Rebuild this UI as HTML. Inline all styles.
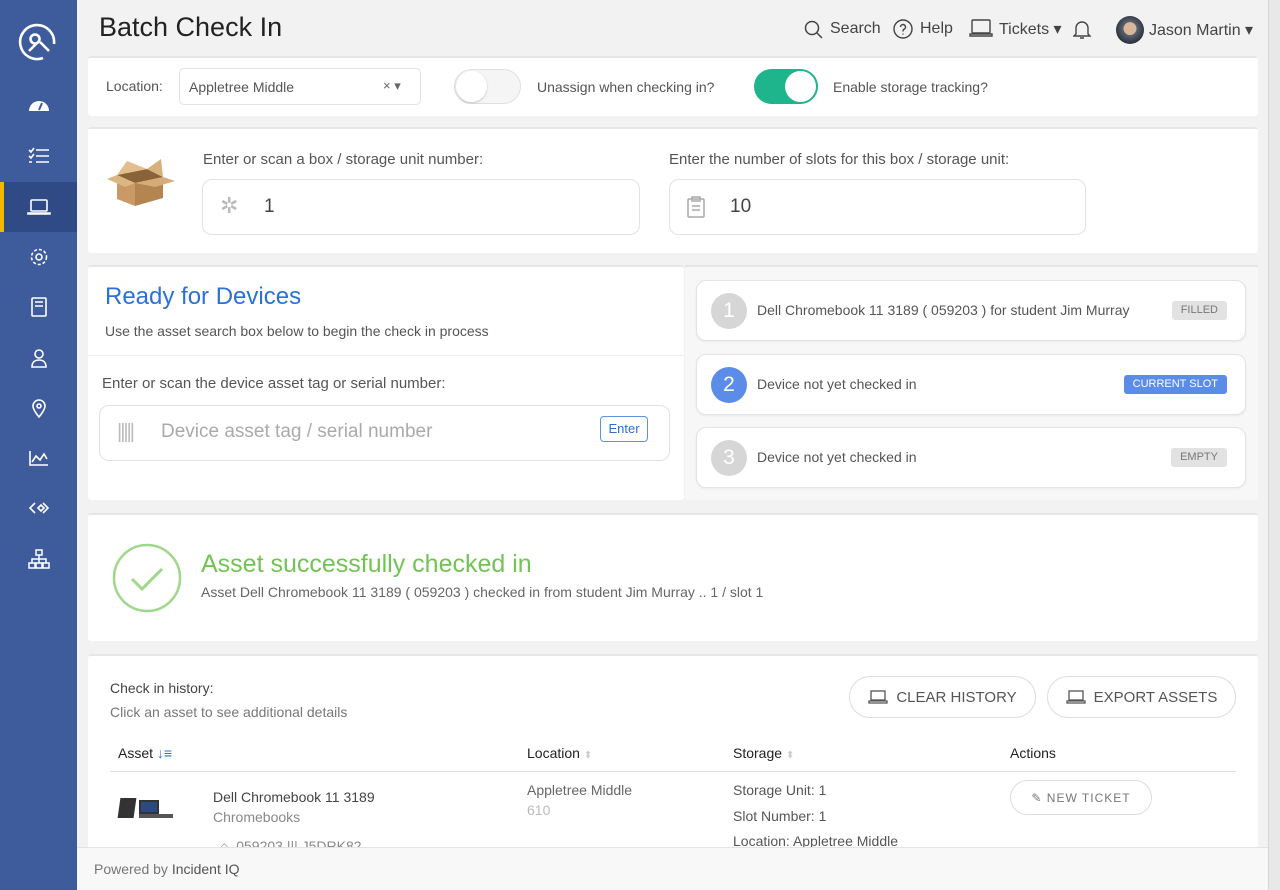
<!DOCTYPE html>
<html><head><meta charset="utf-8"><style>
*{box-sizing:border-box;margin:0;padding:0}
body{width:1280px;height:890px;overflow:hidden;background:#f2f2f2;font-family:"Liberation Sans",sans-serif;color:#555;position:relative}
.abs{position:absolute}
#side{left:0;top:0;width:77px;height:890px;background:#3e5b9b}
.si{position:absolute;left:0;width:77px;height:50px;display:flex;align-items:center;justify-content:center}
.card{position:absolute;background:#fff;border-radius:3px;border-top:2px solid #e6e6e6}
.t{position:absolute;white-space:nowrap}
.inp{position:absolute;border:1px solid #e2e2e2;border-radius:10px;background:#fff}
.slot{position:absolute;left:696px;width:550px;height:61px;background:#fff;border:1px solid #e3e3e3;border-radius:10px;box-shadow:0 1px 2px rgba(0,0,0,.06)}
.num{position:absolute;left:14px;top:12px;width:36px;height:36px;border-radius:50%;background:#d6d6d6;color:#fff;font-size:21px;text-align:center;line-height:36px}
.badge{position:absolute;right:18px;top:20px;height:19px;padding:0 9px;border-radius:3px;background:#e2e2e2;color:#777;font-size:11px;line-height:19px}
.btn{position:absolute;border:1px solid #ddd;border-radius:21px;background:#fff;font-size:15px;color:#555;display:flex;align-items:center;justify-content:center;gap:8px}
</style></head><body>
<div id="side" class="abs">
 <svg class="abs" style="left:17px;top:22px" width="40" height="40" viewBox="0 0 40 40" fill="none" stroke="#fff" stroke-width="2.6"><path d="M26 36A17 17 0 1 1 37 22"/><circle cx="18" cy="17" r="4.5"/><path d="M20 21l-8 8M23 20l9 9"/></svg>
 <div class="si" style="top:80px"><svg width="22" height="18" viewBox="0 0 22 18"><path d="M1 15A10 10 0 0 1 21 15Z" fill="#fff"/><path d="M11 14l3-7" stroke="#3e5b9b" stroke-width="2"/></svg></div>
 <div class="si" style="top:131px"><svg width="22" height="18" viewBox="0 0 22 18" stroke="#fff" stroke-width="1.6" fill="none"><path d="M1 3l2 2 3-4M1 9l2 2 3-4M1 15h3M8 3h13M8 9h13M8 15h13"/></svg></div>
 <div class="si" style="top:182px;background:#2f4a85"><div class="abs" style="left:0;top:0;width:4px;height:50px;background:#f5b800"></div><svg width="24" height="18" viewBox="0 0 24 18" stroke="#fff" stroke-width="1.6" fill="none"><rect x="4" y="2" width="16" height="11" rx="1"/><path d="M1 15h22v1H1z"/></svg></div>
 <div class="si" style="top:232px"><svg width="20" height="20" viewBox="0 0 20 20" stroke="#fff" stroke-width="1.6" fill="none"><circle cx="10" cy="10" r="3"/><circle cx="10" cy="10" r="7.5" stroke-dasharray="3 2"/></svg></div>
 <div class="si" style="top:282px"><svg width="18" height="20" viewBox="0 0 18 20" stroke="#fff" stroke-width="1.6" fill="none"><rect x="2" y="1" width="14" height="18" rx="1"/><path d="M5 5h8M5 9h8"/></svg></div>
 <div class="si" style="top:333px"><svg width="18" height="20" viewBox="0 0 18 20" stroke="#fff" stroke-width="1.6" fill="none"><circle cx="9" cy="6" r="4"/><path d="M2 19c0-5 3-7 7-7s7 2 7 7z"/></svg></div>
 <div class="si" style="top:383px"><svg width="16" height="20" viewBox="0 0 16 20" stroke="#fff" stroke-width="1.6" fill="none"><path d="M8 19s-6-7-6-11a6 6 0 0 1 12 0c0 4-6 11-6 11z"/><circle cx="8" cy="8" r="2"/></svg></div>
 <div class="si" style="top:433px"><svg width="20" height="16" viewBox="0 0 20 16" stroke="#fff" stroke-width="1.6" fill="none"><path d="M1 1v14h18M3 12l4-6 4 4 4-6 3 5"/></svg></div>
 <div class="si" style="top:483px"><svg width="20" height="16" viewBox="0 0 20 16" stroke="#fff" stroke-width="1.6" fill="none"><path d="M6 3L1 8l5 5M14 3l5 5-5 5M9 8l3-3 3 3-3 3z"/></svg></div>
 <div class="si" style="top:534px"><svg width="22" height="20" viewBox="0 0 22 20" stroke="#fff" stroke-width="1.5" fill="none"><rect x="8" y="1" width="6" height="5"/><rect x="1" y="14" width="6" height="5"/><rect x="8" y="14" width="6" height="5"/><rect x="15" y="14" width="6" height="5"/><path d="M11 6v8M4 14v-4h14v4"/></svg></div>
</div>
<div class="abs" style="left:1268px;top:0;width:12px;height:890px;background:#e8e8e8;border-left:1px solid #d6d6d6"></div>

<div class="t" style="left:99px;top:12px;font-size:27px;color:#222">Batch Check In</div>
<svg class="abs" style="left:804px;top:20px" width="19" height="19" viewBox="0 0 19 19" stroke="#444" stroke-width="1.5" fill="none"><circle cx="8" cy="8" r="6.5"/><path d="M13 13l5 5"/></svg>
<div class="t" style="left:830px;top:20px;font-size:16px;color:#444">Search</div>
<svg class="abs" style="left:893px;top:19px" width="20" height="20" viewBox="0 0 20 20" stroke="#444" stroke-width="1.4" fill="none"><circle cx="10" cy="10" r="9"/><path d="M7.5 8a2.5 2.5 0 1 1 3.5 2.3c-1 .5-1 1-1 2.2M10 14.5v1"/></svg>
<div class="t" style="left:920px;top:20px;font-size:16px;color:#444">Help</div>
<svg class="abs" style="left:969px;top:19px" width="24" height="19" viewBox="0 0 24 19" stroke="#444" stroke-width="1.4" fill="none"><rect x="3" y="1" width="18" height="13" rx="1"/><path d="M1 15h22v2H1z"/></svg>
<div class="t" style="left:999px;top:19px;font-size:16px;color:#444">Tickets ▾</div>
<svg class="abs" style="left:1073px;top:19px" width="18" height="21" viewBox="0 0 18 21" stroke="#444" stroke-width="1.4" fill="none"><path d="M3 15V9a6 6 0 0 1 12 0v6l2 2H1zM7 19h4"/></svg>
<div class="abs" style="left:1116px;top:16px;width:28px;height:28px;border-radius:50%;background:radial-gradient(circle at 50% 45%,#d9b59a 0 30%,#5b6470 32%,#2c3340 70%)"></div>
<div class="t" style="left:1149px;top:20px;font-size:16px;color:#444">Jason Martin ▾</div>

<div class="card" style="left:88px;top:56px;width:1170px;height:60px"></div>
<div class="t" style="left:106px;top:78px;font-size:14px">Location:</div>
<div class="inp" style="left:179px;top:68px;width:242px;height:37px;border-radius:5px"></div>
<div class="t" style="left:189px;top:79px;font-size:14px">Appletree Middle</div>
<div class="t" style="left:383px;top:78px;font-size:13px;color:#666">× ▾</div>
<div class="abs" style="left:454px;top:69px;width:67px;height:35px;border-radius:18px;background:#f5f5f5;border:1px solid #e0e0e0"><div class="abs" style="left:1px;top:1px;width:31px;height:31px;border-radius:50%;background:#fff;box-shadow:0 1px 2px rgba(0,0,0,.2)"></div></div>
<div class="t" style="left:537px;top:79px;font-size:14px">Unassign when checking in?</div>
<div class="abs" style="left:754px;top:69px;width:64px;height:35px;border-radius:18px;background:#1eb48c"><div class="abs" style="left:31px;top:2px;width:31px;height:31px;border-radius:50%;background:#fff"></div></div>
<div class="t" style="left:833px;top:79px;font-size:14px">Enable storage tracking?</div>

<div class="card" style="left:88px;top:127px;width:1170px;height:126px"></div>
<svg class="abs" style="left:105px;top:155px" width="72" height="52" viewBox="0 0 72 52">
 <path d="M12 20l30-6 16 8-28 6z" fill="#8a6238"/>
 <path d="M12 20v24l18 7V28z" fill="#c99a66"/>
 <path d="M30 28v23l28-8V22z" fill="#b5854f"/>
 <path d="M12 20L2 24l18 8 10-4z" fill="#dcb682"/>
 <path d="M58 22l12-4-18 10-22 0z" fill="#d4a874" opacity=".0"/>
 <path d="M58 22l12 4-20 6-20-4z" fill="#d6ab77"/>
 <path d="M12 20l10-14 20 8z" fill="#e2be8c"/>
 <path d="M42 14l14-10 2 18z" fill="#d8b07d"/>
</svg>
<div class="t" style="left:203px;top:151px;font-size:15px">Enter or scan a box / storage unit number:</div>
<div class="inp" style="left:202px;top:179px;width:438px;height:56px"></div>
<div class="t" style="left:220px;top:193px;font-size:22px;color:#bbb">✲</div>
<div class="t" style="left:264px;top:196px;font-size:19px;color:#444">1</div>
<div class="t" style="left:669px;top:151px;font-size:15px">Enter the number of slots for this box / storage unit:</div>
<div class="inp" style="left:669px;top:179px;width:417px;height:56px"></div>
<svg class="abs" style="left:687px;top:196px" width="18" height="22" viewBox="0 0 18 22" stroke="#aaa" stroke-width="1.5" fill="none"><rect x="1" y="3" width="16" height="18" rx="1"/><rect x="5" y="1" width="8" height="4"/><path d="M5 10h8M5 14h8"/></svg>
<div class="t" style="left:730px;top:196px;font-size:19px;color:#444">10</div>

<div class="card" style="left:88px;top:265px;width:596px;height:235px"></div>
<div class="abs" style="left:685px;top:265px;width:573px;height:235px;background:#f7f7f7;border-top:2px solid #e6e6e6"></div>
<div class="t" style="left:105px;top:283px;font-size:24px;color:#2a72d6">Ready for Devices</div>
<div class="t" style="left:105px;top:323px;font-size:14px">Use the asset search box below to begin the check in process</div>
<div class="abs" style="left:88px;top:355px;width:596px;height:1px;background:#eee"></div>
<div class="t" style="left:102px;top:375px;font-size:15px">Enter or scan the device asset tag or serial number:</div>
<div class="inp" style="left:99px;top:405px;width:571px;height:56px"></div>
<div class="t" style="left:117px;top:421px;font-size:20px;color:#bbb;letter-spacing:-2px">|||||</div>
<div class="t" style="left:161px;top:421px;font-size:19px;color:#aaa">Device asset tag / serial number</div>
<div class="abs" style="left:600px;top:416px;width:48px;height:26px;border:1px solid #5b93e0;border-radius:4px;color:#2c6fd1;font-size:13px;text-align:center;line-height:24px">Enter</div>

<div class="slot" style="top:280px"><div class="num">1</div><div class="t" style="left:60px;top:21px;font-size:14px">Dell Chromebook 11 3189 ( 059203 ) for student Jim Murray</div><div class="badge">FILLED</div></div>
<div class="slot" style="top:354px"><div class="num" style="background:#5b8de8">2</div><div class="t" style="left:60px;top:21px;font-size:14px">Device not yet checked in</div><div class="badge" style="background:#5b8de8;color:#fff">CURRENT SLOT</div></div>
<div class="slot" style="top:427px"><div class="num">3</div><div class="t" style="left:60px;top:21px;font-size:14px">Device not yet checked in</div><div class="badge">EMPTY</div></div>

<div class="card" style="left:88px;top:513px;width:1170px;height:128px"></div>
<svg class="abs" style="left:112px;top:543px" width="70" height="70" viewBox="0 0 70 70" fill="none" stroke="#9fd88a" stroke-width="2.5"><circle cx="35" cy="35" r="33"/><path d="M20 36l10 10 20-20" stroke-width="3"/></svg>
<div class="t" style="left:201px;top:550px;font-size:25px;color:#72c452">Asset successfully checked in</div>
<div class="t" style="left:201px;top:584px;font-size:14px;color:#666">Asset Dell Chromebook 11 3189 ( 059203 ) checked in from student Jim Murray .. 1 / slot 1</div>

<div class="card" style="left:88px;top:654px;width:1170px;height:236px"></div>
<div class="t" style="left:110px;top:680px;font-size:14px;color:#444">Check in history:</div>
<div class="t" style="left:110px;top:704px;font-size:14px;color:#777">Click an asset to see additional details</div>
<div class="btn" style="left:849px;top:676px;width:187px;height:42px"><svg width="20" height="14" viewBox="0 0 20 14" stroke="#555" stroke-width="1.3" fill="none"><rect x="3" y="1" width="14" height="9"/><path d="M1 11h18v2H1z"/></svg>CLEAR HISTORY</div>
<div class="btn" style="left:1047px;top:676px;width:189px;height:42px"><svg width="20" height="14" viewBox="0 0 20 14" stroke="#555" stroke-width="1.3" fill="none"><rect x="3" y="1" width="14" height="9"/><path d="M1 11h18v2H1z"/></svg>EXPORT ASSETS</div>
<div class="t" style="left:118px;top:745px;font-size:14px;color:#222">Asset <span style="color:#2c6fd1">↓≡</span></div>
<div class="t" style="left:527px;top:745px;font-size:14px;color:#222">Location <span style="color:#ccc;font-size:10px">⬍</span></div>
<div class="t" style="left:733px;top:745px;font-size:14px;color:#222">Storage <span style="color:#ccc;font-size:10px">⬍</span></div>
<div class="t" style="left:1010px;top:745px;font-size:14px;color:#222">Actions</div>
<div class="abs" style="left:110px;top:771px;width:1126px;height:1px;background:#ddd"></div>
<div class="abs" style="left:119px;top:798px;width:16px;height:20px;background:#333;transform:skewX(-8deg)"></div>
<div class="abs" style="left:139px;top:800px;width:20px;height:14px;background:#2b4b80;border:2px solid #333"></div>
<div class="abs" style="left:139px;top:814px;width:34px;height:4px;background:#555"></div>
<div class="t" style="left:213px;top:789px;font-size:14px;color:#444">Dell Chromebook 11 3189</div>
<div class="t" style="left:213px;top:809px;font-size:14px;color:#888">Chromebooks</div>
<div class="t" style="left:220px;top:838px;font-size:14px;color:#888">⌂ &nbsp;059203 ||| J5DRK82</div>
<div class="t" style="left:527px;top:782px;font-size:14px;color:#666">Appletree Middle</div>
<div class="t" style="left:527px;top:802px;font-size:14px;color:#bbb">610</div>
<div class="t" style="left:733px;top:782px;font-size:14px;color:#555">Storage Unit: 1</div>
<div class="t" style="left:733px;top:808px;font-size:14px;color:#555">Slot Number: 1</div>
<div class="t" style="left:733px;top:833px;font-size:14px;color:#555">Location: Appletree Middle</div>
<div class="btn" style="left:1010px;top:780px;width:142px;height:35px;font-size:12px;color:#777;letter-spacing:1px">✎ NEW TICKET</div>

<div class="abs" style="left:77px;top:847px;width:1191px;height:43px;background:#f8f8f8;border-top:1px solid #e3e3e3"></div>
<div class="t" style="left:94px;top:861px;font-size:14px;color:#777">Powered by <span style="color:#555">Incident IQ</span></div>
</body></html>
